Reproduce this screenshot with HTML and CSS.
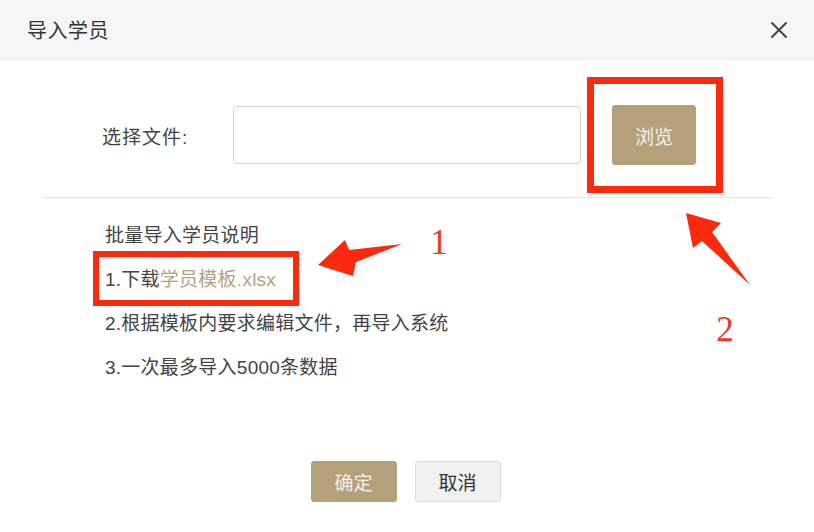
FILE: index.html
```html
<!DOCTYPE html>
<html lang="zh-CN">
<head>
<meta charset="utf-8">
<title>导入学员</title>
<link rel="stylesheet" href="styles.css">
</head>
<body>
<div class="dialog">
  <div class="header">
    <span class="title">导入学员</span>
    <svg class="close" width="18" height="18" viewBox="0 0 18 18"><path d="M2 2 L16 16 M16 2 L2 16" stroke="#444" stroke-width="2" stroke-linecap="round"/></svg>
  </div>
  <div class="upload-row">
    <span class="label">选择文件:</span>
    <div class="file-input"></div>
    <button class="btn btn-primary btn-browse">浏览</button>
  </div>
  <div class="divider"></div>
  <div class="notes">
    <div class="note">批量导入学员说明</div>
    <div class="note">1.下载<span class="link">学员模板.xlsx</span></div>
    <div class="note">2.根据模板内要求编辑文件，再导入系统</div>
    <div class="note">3.一次最多导入5000条数据</div>
  </div>
  <div class="footer">
    <button class="btn btn-primary btn-ok">确定</button>
    <button class="btn btn-default">取消</button>
  </div>
</div>
<svg class="annotations" width="814" height="532" viewBox="0 0 814 532">
  <rect x="590.5" y="80.5" width="129" height="109" fill="none" stroke="#fb2a0e" stroke-width="7"/>
  <rect x="96" y="254" width="200" height="49" fill="none" stroke="#fb2a0e" stroke-width="6"/>
  <polygon points="318,265 345,240 349,250 402,244 356,262 353,276" fill="#fb2a0e"/>
  <polygon points="686,213 721,223 712,232 750,285 702,241 693,248" fill="#fb2a0e"/>
  <text x="439" y="254" class="num" text-anchor="middle">1</text>
  <text x="725" y="341" class="num" text-anchor="middle">2</text>
</svg>
</body>
</html>
```
FILE: styles.css
```css
* { box-sizing: border-box; }
html, body { margin: 0; padding: 0; background: #fff; }
body {
  width: 814px;
  height: 532px;
  overflow: hidden;
  position: relative;
  font-family: "Liberation Sans", "Noto Sans CJK SC", sans-serif;
  color: #444;
}
.dialog { display: flex; flex-direction: column; height: 532px; }
.header {
  height: 60px;
  background: #f6f6f6;
  border-bottom: 1px solid #ececec;
  display: flex;
  align-items: center;
  justify-content: space-between;
  padding: 0 26px 0 27px;
}
.title { font-size: 20px; color: #333; letter-spacing: 0.5px; }
.close { display: block; }
.upload-row {
  display: flex;
  align-items: center;
  margin-top: 45px;
  padding-left: 102px;
  height: 60px;
}
.label { font-size: 19px; color: #444; width: 131px; letter-spacing: 1px; }
.file-input {
  width: 348px;
  height: 58px;
  border: 1px solid #d4d4d4;
  border-radius: 4px;
  background: #fff;
}
.btn {
  font-family: "Liberation Sans", "Noto Sans CJK SC", sans-serif;
  font-size: 19px;
  border-radius: 3px;
  border: 1px solid transparent;
  padding: 0;
  cursor: pointer;
}
.btn-primary { background: #b4a17a; color: #f5f1ea; border-color: #b4a17a; }
.btn-default { background: #f1f1f1; color: #333; border-color: #dcdcdc; }
.btn-browse { width: 84px; height: 60px; margin-left: 31px; }
.divider { height: 1px; background: #e4e4e4; margin: 32px 42px 0 42px; }
.notes { padding: 16px 0 0 105px; }
.note { font-size: 19px; line-height: 44px; height: 44px; color: #444; letter-spacing: 0.25px; }
.link { color: #b5a27e; }
.footer {
  display: flex;
  justify-content: center;
  gap: 18px;
  margin-top: 71px;
  padding-right: 3px;
}
.btn-ok, .footer .btn-default { width: 86px; height: 41px; }
.annotations { position: absolute; left: 0; top: 0; pointer-events: none; }
.num { font-family: "Liberation Serif", serif; font-size: 35px; fill: #ee3a22; }
```
